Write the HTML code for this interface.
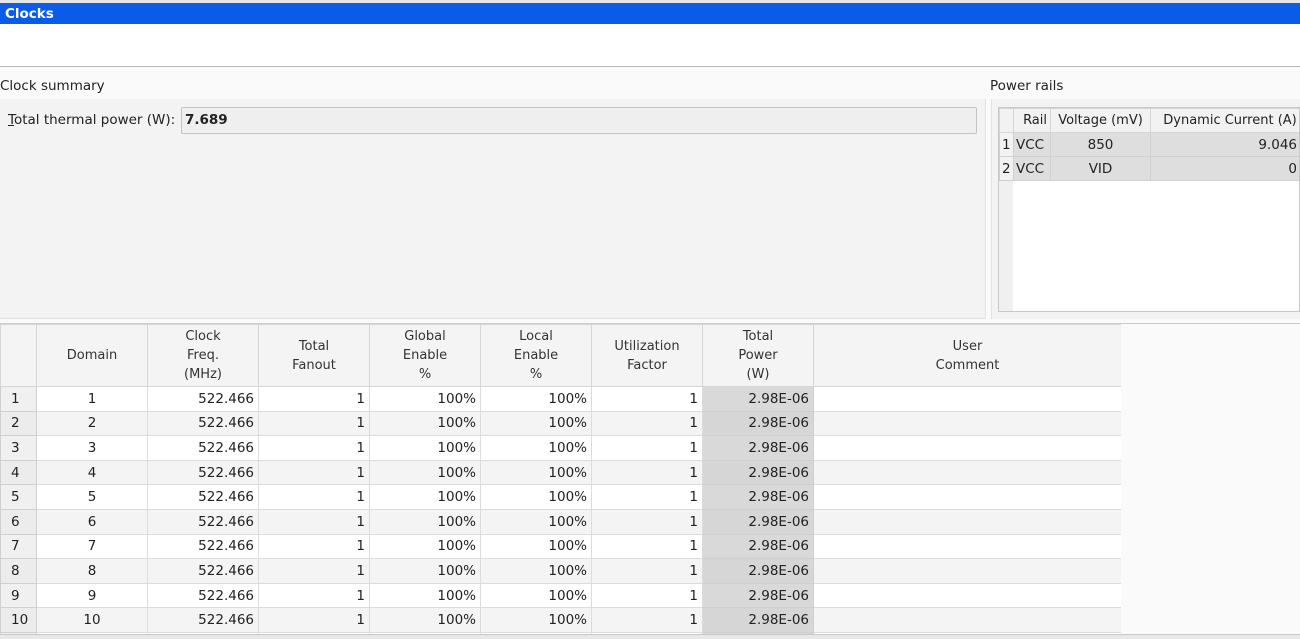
<!DOCTYPE html>
<html><head><style>
*{box-sizing:border-box;margin:0;padding:0}
body{width:1300px;height:639px;overflow:hidden;background:#fff;font-family:"DejaVu Sans","Liberation Sans",sans-serif;font-size:13px;color:#222;position:relative}
.abs{position:absolute}
table{border-collapse:collapse;table-layout:fixed}
td,th{font-weight:normal;overflow:hidden;white-space:nowrap}
#main th{background:#f4f4f4;border:1px solid #d6d6d6;color:#333;line-height:19px;font-size:13px}
#main td{height:24.6px;border:1px solid #dcdcdc;padding:0 4px;font-size:13.5px;background:#fff}
#main td.r{text-align:right}
#main td.c{text-align:center}
#main td.n{background:#f0f0f0;text-align:left;padding-left:10px;border-color:#d0d0d0}
#main td.p{background:#d9d9d9;text-align:right;border-color:#cfcfcf}
#main tr.e td{background:#f4f4f4}
#main tr.e td.n{background:#ececec}
#main tr.e td.p{background:#d6d6d6}
#pr th{background:#f2f2f2;border:1px solid #d6d6d6;height:24px;font-size:13px}
#pr td{background:#dedede;border:1px solid #d0d0d0;height:24px;padding:0 4px;font-size:13.5px}
</style></head><body>
<div class="abs" style="left:0;top:0;width:1300px;height:3px;background:#e6e6e6"></div>
<div class="abs" style="left:0;top:3px;width:1300px;height:21px;background:#0a5ce8;color:#fff;font-weight:bold;font-size:13.5px;padding:3px 0 0 5px">Clocks</div>
<div class="abs" style="left:0;top:66px;width:1300px;height:1px;background:#b8b8b8"></div>
<div class="abs" style="left:0;top:67px;width:1300px;height:258px;background:#fafafa"></div>
<div class="abs" style="left:0;top:78px;font-size:13.5px">Clock summary</div>
<div class="abs" style="left:990px;top:78px;font-size:13.5px">Power rails</div>
<div class="abs" style="left:0;top:99px;width:986px;height:220px;background:#f3f3f3;border-right:1px solid #e2e2e2;border-bottom:1px solid #e2e2e2"></div>
<div class="abs" style="left:8px;top:112px;font-size:13.5px"><u>T</u>otal thermal power (W):</div>
<div class="abs" style="left:181px;top:107px;width:796px;height:27px;background:#efefef;border:1px solid #c4c4c4;border-radius:2px;font-weight:bold;font-size:13.5px;padding:4px 0 0 3px">7.689</div>
<div class="abs" style="left:991px;top:99px;width:309px;height:220px;background:#f3f3f3;border-left:1px solid #e2e2e2"></div>
<div class="abs" style="left:998px;top:107px;width:302px;height:205px;background:#fff;border:1px solid #c8c8c8;overflow:hidden">
<div class="abs" style="left:0;top:0;width:14px;height:205px;background:#f0f0f0"></div>
<table id="pr" class="abs" style="left:0;top:0;width:310px">
<tr><th style="width:14px"></th><th style="width:37px;text-align:right;padding-right:3px">Rail</th><th style="width:100px">Voltage (mV)</th><th style="width:159px">Dynamic Current (A)</th></tr>
<tr><td style="background:#f2f2f2;padding:0 2px">1</td><td style="padding:0 2px">VCC</td><td style="text-align:center">850</td><td style="text-align:right;padding-right:12px">9.046</td></tr>
<tr><td style="background:#f2f2f2;padding:0 2px">2</td><td style="padding:0 2px">VCC</td><td style="text-align:center">VID</td><td style="text-align:right;padding-right:12px">0</td></tr>
</table></div>
<div class="abs" style="left:0;top:323px;width:1300px;height:316px;background:#f5f5f5;border-top:1px solid #ccc"></div>
<div class="abs" style="left:1121px;top:324px;width:179px;height:315px;background:#fafafa"></div>
<div class="abs" style="left:0;top:324px;width:1121px;height:310px;overflow:hidden">
<table id="main" class="abs" style="left:0;top:0;width:1121px">
<tr style="height:62px"><th style="width:36px"></th><th style="width:111px">Domain</th><th style="width:111px">Clock<br>Freq.<br>(MHz)</th><th style="width:111px">Total<br>Fanout</th><th style="width:111px">Global<br>Enable<br>%</th><th style="width:111px">Local<br>Enable<br>%</th><th style="width:111px">Utilization<br>Factor</th><th style="width:111px">Total<br>Power<br>(W)</th><th style="width:308px">User<br>Comment</th></tr>
<tr><td class="n">1</td><td class="c">1</td><td class="r">522.466</td><td class="r">1</td><td class="r">100%</td><td class="r">100%</td><td class="r">1</td><td class="p">2.98E-06</td><td></td></tr>
<tr class="e"><td class="n">2</td><td class="c">2</td><td class="r">522.466</td><td class="r">1</td><td class="r">100%</td><td class="r">100%</td><td class="r">1</td><td class="p">2.98E-06</td><td></td></tr>
<tr><td class="n">3</td><td class="c">3</td><td class="r">522.466</td><td class="r">1</td><td class="r">100%</td><td class="r">100%</td><td class="r">1</td><td class="p">2.98E-06</td><td></td></tr>
<tr class="e"><td class="n">4</td><td class="c">4</td><td class="r">522.466</td><td class="r">1</td><td class="r">100%</td><td class="r">100%</td><td class="r">1</td><td class="p">2.98E-06</td><td></td></tr>
<tr><td class="n">5</td><td class="c">5</td><td class="r">522.466</td><td class="r">1</td><td class="r">100%</td><td class="r">100%</td><td class="r">1</td><td class="p">2.98E-06</td><td></td></tr>
<tr class="e"><td class="n">6</td><td class="c">6</td><td class="r">522.466</td><td class="r">1</td><td class="r">100%</td><td class="r">100%</td><td class="r">1</td><td class="p">2.98E-06</td><td></td></tr>
<tr><td class="n">7</td><td class="c">7</td><td class="r">522.466</td><td class="r">1</td><td class="r">100%</td><td class="r">100%</td><td class="r">1</td><td class="p">2.98E-06</td><td></td></tr>
<tr class="e"><td class="n">8</td><td class="c">8</td><td class="r">522.466</td><td class="r">1</td><td class="r">100%</td><td class="r">100%</td><td class="r">1</td><td class="p">2.98E-06</td><td></td></tr>
<tr><td class="n">9</td><td class="c">9</td><td class="r">522.466</td><td class="r">1</td><td class="r">100%</td><td class="r">100%</td><td class="r">1</td><td class="p">2.98E-06</td><td></td></tr>
<tr class="e"><td class="n">10</td><td class="c">10</td><td class="r">522.466</td><td class="r">1</td><td class="r">100%</td><td class="r">100%</td><td class="r">1</td><td class="p">2.98E-06</td><td></td></tr>
<tr><td class="n"></td><td></td><td></td><td></td><td></td><td></td><td></td><td class="p"></td><td></td></tr>
</table></div>
<div class="abs" style="left:0;top:634px;width:1300px;height:5px;background:#e8e8e8;border-top:1px solid #c8c8c8"></div>
</body></html>
